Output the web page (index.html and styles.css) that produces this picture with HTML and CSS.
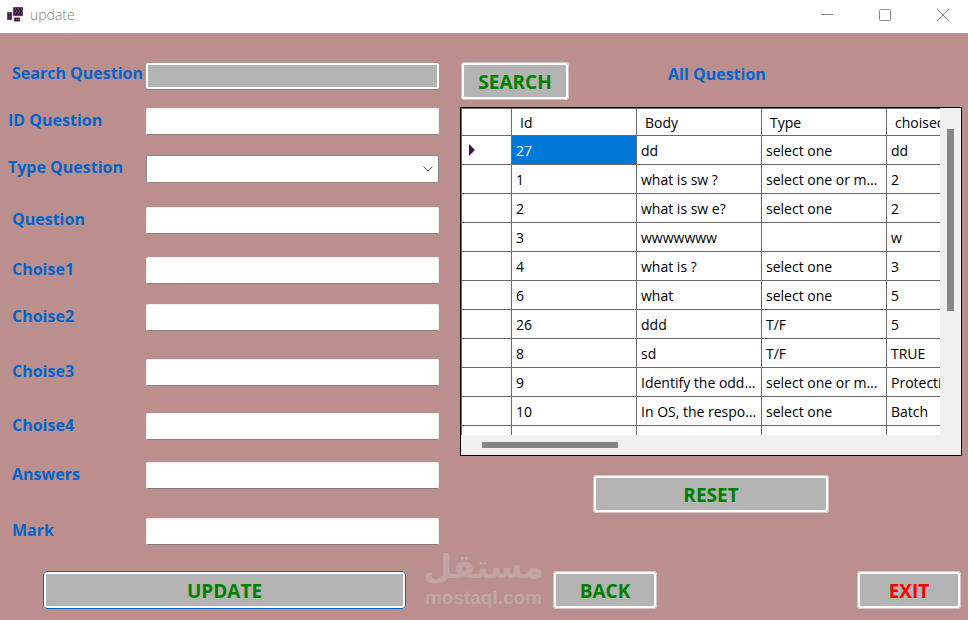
FILE: index.html
```html
<!DOCTYPE html>
<html lang="en">
<head>
  <meta charset="UTF-8" />
  <title>update</title>
  <link rel="stylesheet" href="styles.css">
</head>
<body>
  <header class="titlebar">
    <svg class="app-icon" width="16" height="16" viewBox="0 0 16 16">
      <rect x="0" y="5" width="5" height="8" fill="#3d1a3d" stroke="#b9a9b9" stroke-width="0.6"/>
      <rect x="6" y="0" width="10" height="9" fill="#3d1a3d" stroke="#b9a9b9" stroke-width="0.6"/>
      <rect x="7" y="10.5" width="6" height="4" fill="#3d1a3d" stroke="#b9a9b9" stroke-width="0.6"/>
      <path d="M8 2h1M11 2h1M14 2h1M9 4h1M12 4h1M8 6h1M11 6h1M14 6h1M2 7h1M2 10h1M9 12.5h1M11 12.5h1" stroke="#8b7a9b"/>
    </svg>
    <span class="title">update</span>
    <button class="win-btn" aria-label="Minimize"><svg width="12" height="12" viewBox="0 0 12 12"><path d="M0 5.500h12"/></svg></button>
    <button class="win-btn" aria-label="Maximize"><svg width="12" height="12" viewBox="0 0 12 12"><rect x="0.500" y="0.500" width="11" height="11" rx="1"/></svg></button>
    <button class="win-btn" aria-label="Close"><svg width="12" height="12" viewBox="0 0 12 12"><path d="M0 0l12 12M12 0L0 12"/></svg></button>
  </header>

  <main>
    <form class="fields">
      <label class="indent" for="search">Search Question</label><input class="search-box" id="search" type="text">
      <label for="qid">ID Question</label><input id="qid" type="text">
      <label for="qtype">Type Question</label>
      <select id="qtype"><option></option><option>select one</option><option>select one or more</option><option>T/F</option></select>
      <label class="indent" for="question">Question</label><input id="question" type="text">
      <label class="indent" for="choise1">Choise1</label><input id="choise1" type="text">
      <label class="indent" for="choise2">Choise2</label><input id="choise2" type="text">
      <label class="indent" for="choise3">Choise3</label><input id="choise3" type="text">
      <label class="indent" for="choise4">Choise4</label><input id="choise4" type="text">
      <label class="indent" for="answers">Answers</label><input id="answers" type="text">
      <label class="indent" for="mark">Mark</label><input id="mark" type="text">
    </form>

    <section class="list">
      <div class="list-head">
        <button class="btn btn-search">SEARCH</button>
        <h2>All Question</h2>
      </div>

      <div class="grid-box">
        <div class="grid-view">
          <table>
            <colgroup><col class="col-mark"><col><col><col><col></colgroup>
            <thead>
              <tr><th></th><th>Id</th><th>Body</th><th>Type</th><th>choisecount</th></tr>
            </thead>
            <tbody>
              <tr><td><span class="arrow"></span></td><td class="selected">27</td><td>dd</td><td>select one</td><td>dd</td></tr>
              <tr><td></td><td>1</td><td>what is sw ?</td><td>select one or more</td><td>2</td></tr>
              <tr><td></td><td>2</td><td>what is sw e?</td><td>select one</td><td>2</td></tr>
              <tr><td></td><td>3</td><td>wwwwwww</td><td></td><td>w</td></tr>
              <tr><td></td><td>4</td><td>what is ?</td><td>select one</td><td>3</td></tr>
              <tr><td></td><td>6</td><td>what</td><td>select one</td><td>5</td></tr>
              <tr><td></td><td>26</td><td>ddd</td><td>T/F</td><td>5</td></tr>
              <tr><td></td><td>8</td><td>sd</td><td>T/F</td><td>TRUE</td></tr>
              <tr><td></td><td>9</td><td>Identify the odd one</td><td>select one or more</td><td>Protection</td></tr>
              <tr><td></td><td>10</td><td>In OS, the response time</td><td>select one</td><td>Batch</td></tr>
              <tr><td></td><td></td><td></td><td></td><td></td></tr>
            </tbody>
          </table>
        </div>
        <div class="scroll-y"><div class="thumb"></div></div>
        <div class="scroll-x"><div class="thumb"></div></div>
      </div>

      <button class="btn btn-reset">RESET</button>
    </section>
  </main>

  <footer>
    <button class="btn btn-update">UPDATE</button>
    <div class="watermark">
      <span class="mark-ar" lang="ar" dir="rtl">مستقل</span>
      <span class="mark-en">mostaql.com</span>
    </div>
    <button class="btn btn-back">BACK</button>
    <button class="btn btn-exit">EXIT</button>
  </footer>
</body>
</html>
```
FILE: styles.css
```css
* { box-sizing: border-box; }
body {
  margin: 0;
  min-height: 100vh;
  background-color: #bc8f8f;
  font-family: "Open Sans", "Noto Sans", sans-serif;
  font-size: 14px;
  color: #000;
}

/* Title bar */
.titlebar {
  display: flex;
  align-items: center;
  height: 33px;
  padding: 0 0 4px 7px;
  background-color: #fff;
}
.title {
  flex: 1;
  margin-left: 7px;
  color: #808080;
  font-weight: 300;
}
.win-btn {
  width: 50px;
  height: 29px;
  margin-left: 8px;
  padding: 0;
  border: none;
  background: none;
}
.win-btn svg {
  display: block;
  margin: 0 auto;
  fill: none;
  stroke: #8a8a8a;
}

main {
  display: grid;
  grid-template-columns: 439px 1fr;
  column-gap: 21px;
  padding: 28px 6px 0 0;
}

/* Form */
.fields {
  display: grid;
  grid-template-columns: 146px 1fr;
  grid-template-rows: 47px 47px 52px 50px 47px 55px 54px 49px 56px 28px;
  align-items: start;
}
label, h2 {
  color: #0066cc;
  font-size: 16px;
  line-height: 24px;
  font-weight: bold;
  white-space: nowrap;
}
label { padding-left: 8px; }
label.indent { padding-left: 12px; }
input, select {
  width: 100%;
  height: 27px;
  padding: 0 4px;
  border: 1px solid #f0f0f0;
  border-bottom-color: #808080;
  border-radius: 2px;
  background-color: #fff;
  font: inherit;
}
.search-box {
  height: 26px;
  margin-top: 2px;
  border: 2px solid #fff;
  background-color: #b4b4b4;
  box-shadow: 0 1px #808080;
}
select {
  appearance: none;
  height: 28px;
  border-color: #8a8a8a;
  background: #fff url("data:image/svg+xml,%3Csvg xmlns='http://www.w3.org/2000/svg' width='10' height='6'%3E%3Cpath d='M.5.500l4.500 4.500 4.500-4.500' fill='none' stroke='%23555'/%3E%3C/svg%3E") no-repeat right 5px center;
}

/* Buttons */
.btn {
  height: 38px;
  padding: 2px 0 0;
  border: 3px solid #fff;
  border-radius: 4px;
  outline: 1px solid #d0c4c4;
  outline-offset: -1px;
  background-color: #b4b4b4;
  color: #008000;
  font-family: inherit;
  font-size: 19px;
  font-weight: bold;
  line-height: 30px;
}
.btn-search { width: 108px; }
.btn-reset {
  display: block;
  width: 236px;
  margin: 19px auto 0;
}
.btn-update {
  width: 363px;
  outline-color: #0067c0;
}
.btn-back { width: 104px; }
.btn-exit {
  width: 104px;
  margin-left: auto;
  color: #f00;
}

/* Question list */
.list { padding-top: 1px; }
.list-head {
  display: flex;
  height: 45px;
  padding-left: 1px;
}
h2 { margin: 0 0 0 99px; }
.grid-box {
  display: grid;
  grid-template-columns: 1fr 21px;
  grid-template-rows: 327px 20px;
  border: 1px solid #000;
  background-color: #f0f0f0;
}
.grid-view {
  overflow: hidden;
  background-color: #fff;
}
table {
  width: 551px;
  table-layout: fixed;
  border-collapse: collapse;
}
col { width: 125px; }
.col-mark { width: 50px; }
th, td {
  height: 29px;
  padding: 0 4px;
  border: 1px solid #696969;
  overflow: hidden;
  text-align: left;
  text-overflow: ellipsis;
  white-space: nowrap;
  font-weight: normal;
}
th {
  height: 27px;
  padding-left: 8px;
}
.selected {
  background-color: #0078d7;
  color: #fff;
}
.arrow {
  display: block;
  width: 0;
  margin-left: 3px;
  border: 6px solid transparent;
  border-left-color: #3d1a3d;
  border-right: none;
}
.scroll-y { padding: 21px 7px 0; }
.scroll-x { padding: 7px 21px 0; }
.thumb { background-color: #858585; }
.scroll-y .thumb { height: 182px; }
.scroll-x .thumb {
  width: 136px;
  height: 6px;
}

/* Bottom bar */
footer {
  display: flex;
  align-items: flex-end;
  height: 63px;
  padding: 0 7px 0 43px;
}
.watermark {
  display: flex;
  flex-direction: column;
  align-items: center;
  width: 147px;
  padding-left: 8px;
  color: #c2a5a3;
  font-weight: bold;
}
.mark-ar {
  font-family: "DejaVu Sans", sans-serif;
  font-size: 33px;
  line-height: 40px;
}
.mark-en {
  font-family: "Liberation Sans", sans-serif;
  font-size: 19px;
  line-height: 22px;
}
```
